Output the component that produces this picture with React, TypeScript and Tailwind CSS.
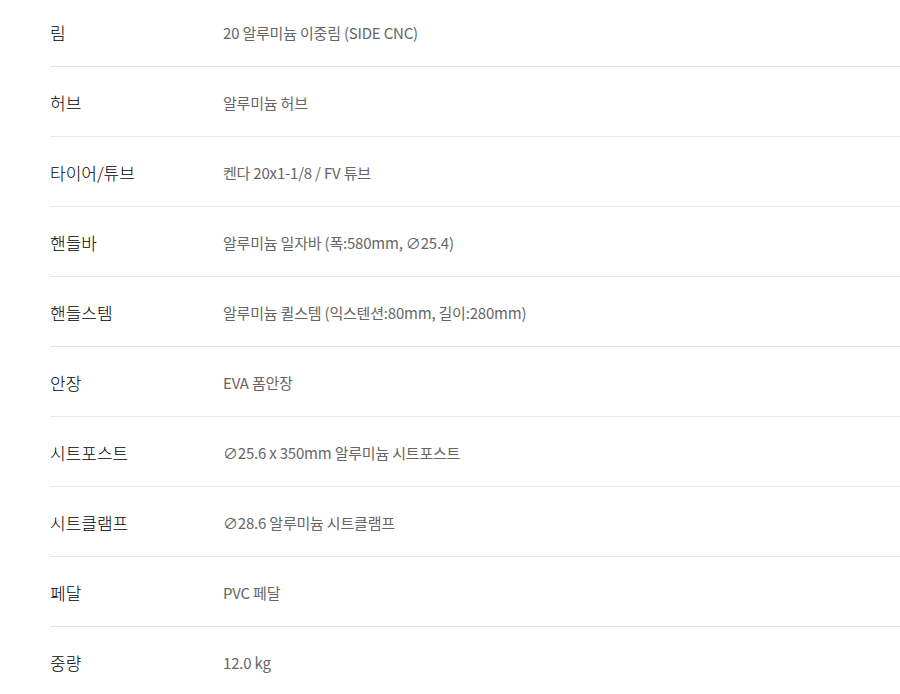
import React from "react";

const rows: [string, string][] = [
  ["림", "20 알루미늄 이중림 (SIDE CNC)"],
  ["허브", "알루미늄 허브"],
  ["타이어/튜브", "켄다 20x1-1/8 / FV 튜브"],
  ["핸들바", "알루미늄 일자바 (폭:580mm, ∅25.4)"],
  ["핸들스템", "알루미늄 퀼스템 (익스텐션:80mm, 길이:280mm)"],
  ["안장", "EVA 폼안장"],
  ["시트포스트", "∅25.6 x 350mm 알루미늄 시트포스트"],
  ["시트클램프", "∅28.6 알루미늄 시트클램프"],
  ["페달", "PVC 페달"],
  ["중량", "12.0 kg"],
];

export default function App() {
  return (
    <div
      className="w-[900px] h-[694px] overflow-hidden bg-white"
      style={{ fontFamily: '"Noto Sans CJK KR", "Noto Sans CJK SC", sans-serif' }}
    >
      <div className="ml-[50px] mt-[-3px]">
        {rows.map(([k, v]) => (
          <div key={k} className="flex items-center h-[70px] border-b border-[#e6e6e6] pt-[3px]">
            <div className="w-[173px] shrink-0 text-[17px] font-light text-black">{k}</div>
            <div className="text-[15px] font-normal tracking-[-0.2px] text-[#666]">{v}</div>
          </div>
        ))}
      </div>
    </div>
  );
}
